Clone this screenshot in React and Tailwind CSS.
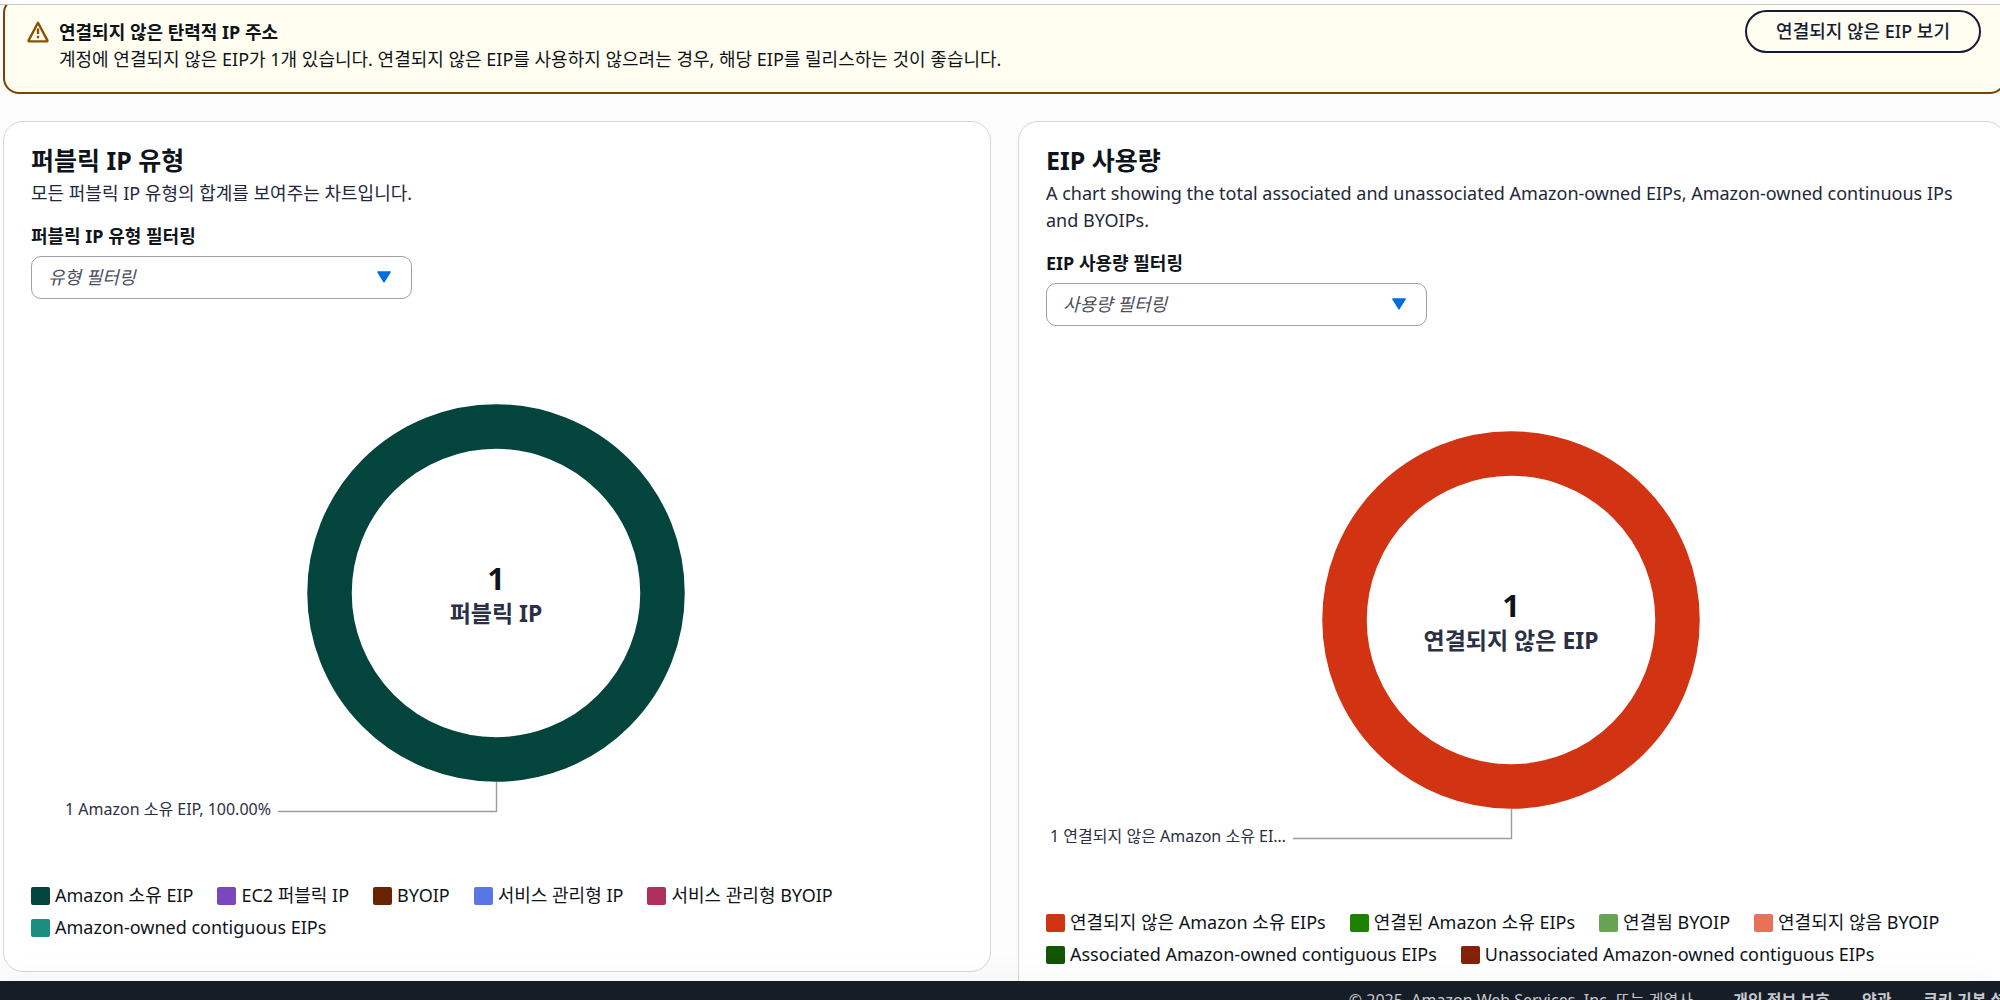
import React from 'react';

const ipTypes = [
  { label: 'Amazon 소유 EIP', color: 'bg-[#03443d]' },
  { label: 'EC2 퍼블릭 IP', color: 'bg-[#7a48be]' },
  { label: 'BYOIP', color: 'bg-[#692406]' },
  { label: '서비스 관리형 IP', color: 'bg-[#5778e3]' },
  { label: '서비스 관리형 BYOIP', color: 'bg-[#b0305c]' },
  { label: 'Amazon-owned contiguous EIPs', color: 'bg-[#1c8e81]' },
];

const eipUsage = [
  { label: '연결되지 않은 Amazon 소유 EIPs', color: 'bg-[#d13313]' },
  { label: '연결된 Amazon 소유 EIPs', color: 'bg-[#1d8102]' },
  { label: '연결됨 BYOIP', color: 'bg-[#67a353]' },
  { label: '연결되지 않음 BYOIP', color: 'bg-[#e97158]' },
  { label: 'Associated Amazon-owned contiguous EIPs', color: 'bg-[#125502]' },
  { label: 'Unassociated Amazon-owned contiguous EIPs', color: 'bg-[#852108]' },
];

const footerLinks = ['개인 정보 보호', '약관', '쿠키 기본 설정'];

function WarningBanner() {
  return (
    <section className="-mt-2 flex items-start rounded-2xl border-2 border-[#7d4200] bg-[#fffef0] pt-[11px] pr-[23px] pb-[19px] pl-[22px]">
      <svg className="mt-[11px] h-[22px] w-[22px] shrink-0" viewBox="0 0 22 22" fill="none" stroke="#8a5200" strokeWidth="2.4" strokeLinejoin="round">
        <path d="M11 1.8 L20.4 19.4 Q20.6 20.4 19.6 20.4 H2.4 Q1.4 20.4 1.6 19.4 Z" />
        <path d="M11 7.6 V13 M11 14.8 V17.2" />
      </svg>
      <div className="ml-[10px] flex-1 pt-[9px]">
        <h2 className="font-bold">연결되지 않은 탄력적 IP 주소</h2>
        <p>계정에 연결되지 않은 EIP가 1개 있습니다. 연결되지 않은 EIP를 사용하지 않으려는 경우, 해당 EIP를 릴리스하는 것이 좋습니다.</p>
      </div>
      <button type="button" className="h-[43px] shrink-0 rounded-full border-2 border-[#161d33] px-[29px] font-medium text-[#161d33]">
        연결되지 않은 EIP 보기
      </button>
    </section>
  );
}

function FilterSelect({ id, label, placeholder }) {
  return (
    <div className="mt-4">
      <label htmlFor={id} className="block font-bold">{label}</label>
      <div className="relative mt-[6px] w-[381px] max-w-full">
        <select id={id} defaultValue="" className="h-[43px] w-full appearance-none rounded-[10px] border border-[#a0a0a8] bg-white pr-12 pl-4 text-[#4b4f5c] italic">
          <option value="">{placeholder}</option>
        </select>
        <svg className="pointer-events-none absolute top-[15px] right-[21px] h-3 w-[14px]" viewBox="0 0 14 12">
          <path d="M0.8 1 H13.2 L7 10.8 Z" fill="#006ce0" stroke="#006ce0" strokeWidth="1.4" strokeLinejoin="round" />
        </svg>
      </div>
    </div>
  );
}

function DonutChart({ color, total, caption, segment }) {
  return (
    <svg className="mx-auto mt-[104px] block h-[424px] w-[880px] max-w-full overflow-visible" viewBox="0 0 880 424">
      <circle cx="439" cy="190" r="166.5" fill="none" stroke={color} strokeWidth="44.5" />
      <polyline points="439.5,379 439.5,408.5 221,408.5" fill="none" stroke="#9d9da6" strokeWidth="1.4" />
      <text x="439" y="187" textAnchor="middle" className="fill-[#0f141a] text-[31px] font-bold">{total}</text>
      <text x="439" y="219" textAnchor="middle" className="fill-[#2b3044] text-[23px] font-bold">{caption}</text>
      <text x="214" y="412" textAnchor="end" className="fill-[#2b3044] text-[16px]">{segment}</text>
    </svg>
  );
}

function Legend({ items }) {
  return (
    <ul className="mt-[55px] flex flex-wrap gap-x-6 gap-y-[5px]">
      {items.map((item) => (
        <li key={item.label} className="flex items-center gap-[5px]">
          <span className={`h-[18px] w-[19px] rounded-[2px] ${item.color}`} />
          {item.label}
        </li>
      ))}
    </ul>
  );
}

function ChartCard({ title, description, filter, chart, legend }) {
  return (
    <section className="rounded-[20px] border border-[#d6d6da] bg-white px-[27px] pt-[22px] pb-[30px]">
      <h2 className="text-[25px] leading-8 font-bold">{title}</h2>
      <p className="mt-1 text-[#23283a]">{description}</p>
      <FilterSelect {...filter} />
      <DonutChart {...chart} />
      <Legend items={legend} />
    </section>
  );
}

export default function App() {
  return (
    <div className="flex h-screen flex-col overflow-hidden bg-[#fcfcfd] font-['Noto_Sans','Noto_Sans_CJK_KR',sans-serif] text-[18px] leading-[27px] text-[#0f141a]">
      <div className="h-[5px] shrink-0 border-b border-[#c6c6cd] bg-white" />

      <main className="min-h-0 flex-1 overflow-hidden pl-[3px]">
        <div className="-mr-[6px]">
          <WarningBanner />
          <div className="mt-[27px] grid grid-cols-2 items-start gap-[27px]">
            <ChartCard
              title="퍼블릭 IP 유형"
              description="모든 퍼블릭 IP 유형의 합계를 보여주는 차트입니다."
              filter={{ id: 'ip-type', label: '퍼블릭 IP 유형 필터링', placeholder: '유형 필터링' }}
              chart={{ color: '#03443d', total: '1', caption: '퍼블릭 IP', segment: '1 Amazon 소유 EIP, 100.00%' }}
              legend={ipTypes}
            />
            <ChartCard
              title="EIP 사용량"
              description="A chart showing the total associated and unassociated Amazon-owned EIPs, Amazon-owned continuous IPs and BYOIPs."
              filter={{ id: 'eip-usage', label: 'EIP 사용량 필터링', placeholder: '사용량 필터링' }}
              chart={{ color: '#d13313', total: '1', caption: '연결되지 않은 EIP', segment: '1 연결되지 않은 Amazon 소유 EI…' }}
              legend={eipUsage}
            />
          </div>
        </div>
      </main>

      <footer className="h-[19px] shrink-0 overflow-hidden bg-[#161d26] pt-[7px] text-[16px] leading-6 text-[#c6c6cd] shadow-[0_-4px_32px_rgba(0,0,0,0.04)]">
        <div className="-mr-5 flex justify-end gap-8 whitespace-nowrap">
          <span className="mr-1">© 2025, Amazon Web Services, Inc. 또는 계열사.</span>
          {footerLinks.map((link) => (
            <a key={link} href="#" className="font-bold">{link}</a>
          ))}
        </div>
      </footer>
    </div>
  );
}
